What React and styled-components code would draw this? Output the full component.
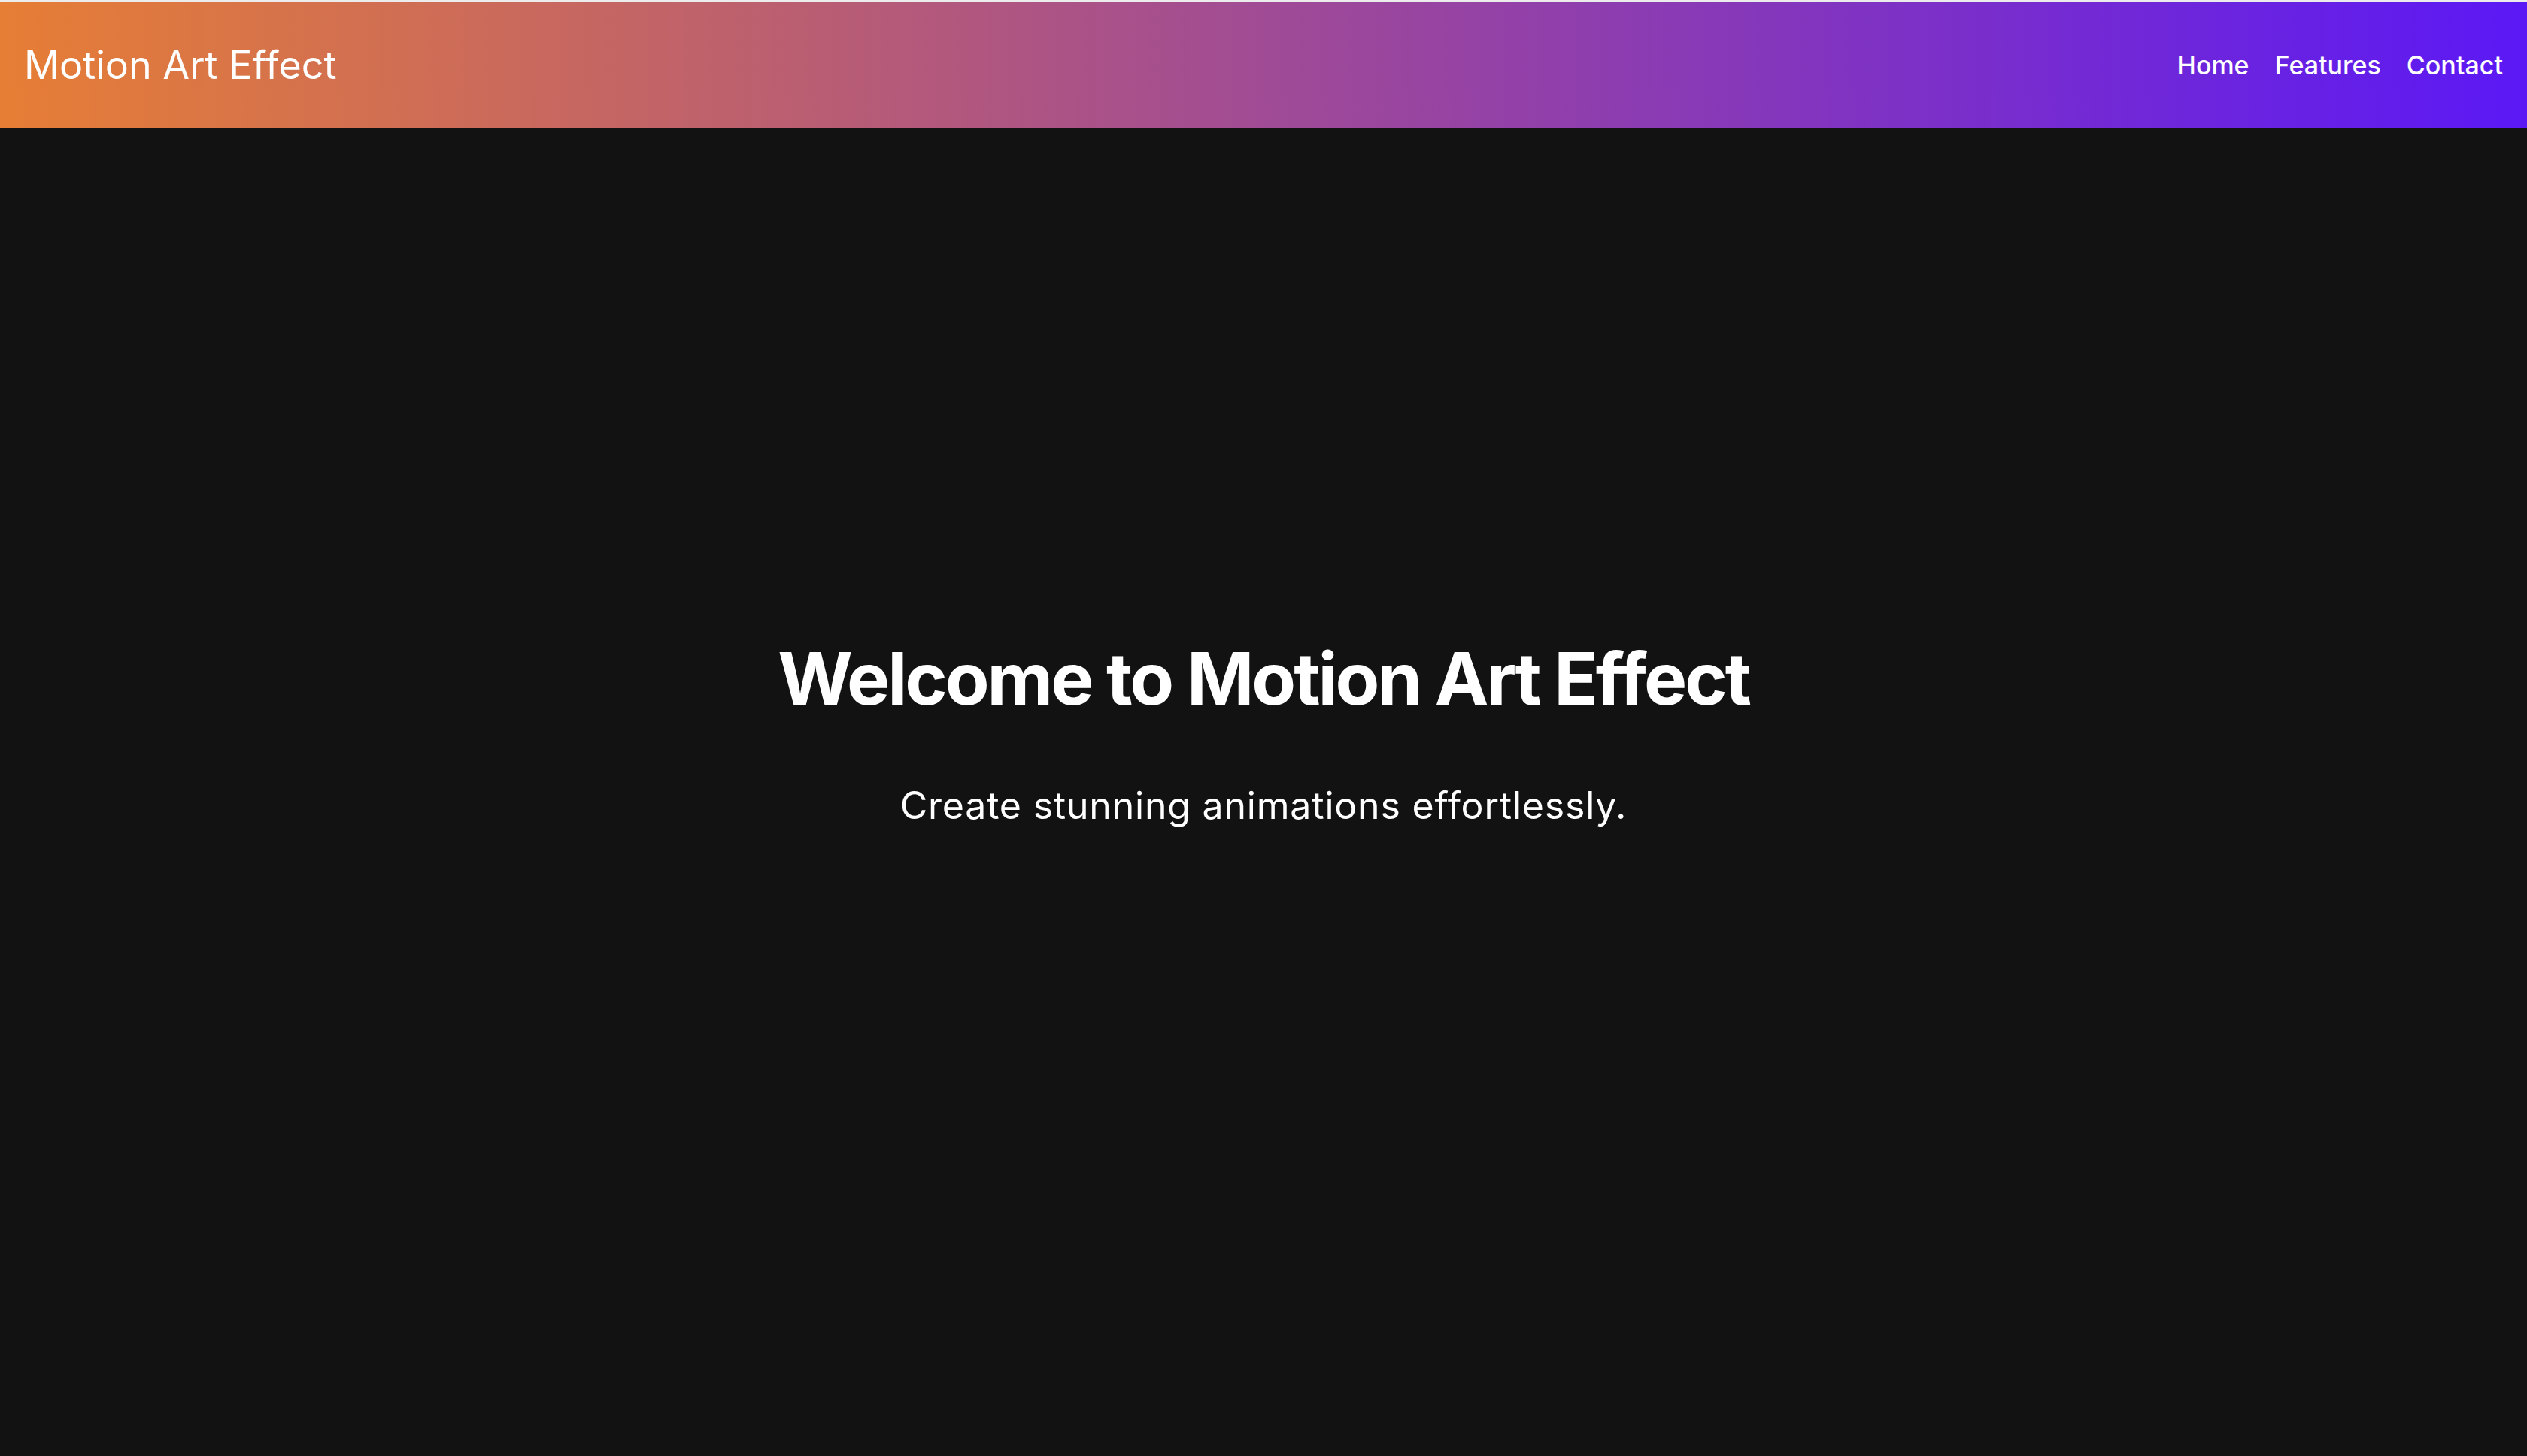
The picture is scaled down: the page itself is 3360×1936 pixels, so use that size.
import React from "react";
import styled, { createGlobalStyle } from "styled-components";

const GlobalStyle = createGlobalStyle`
  html, body {
    margin: 0;
    padding: 0;
  }
  body {
    background: #121212;
    font-family: Inter, "Noto Sans", sans-serif;
    color: #ffffff;
  }
`;

const Page = styled.div`
  min-height: 100vh;
  background: #121212;
  border-top: 2px solid #ececec;
  box-sizing: border-box;
`;

const Header = styled.header`
  height: 168px;
  display: flex;
  align-items: center;
  justify-content: space-between;
  padding: 0 32px;
  background: linear-gradient(90deg, #e67e35 0%, #5b18f5 100%);
`;

const Logo = styled.div`
  font-size: 52px;
  font-weight: 400;
  color: #fff;
`;

const Nav = styled.nav`
  display: flex;
  gap: 34px;
`;

const NavLink = styled.a`
  font-size: 34px;
  font-weight: 500;
  color: #fff;
  text-decoration: none;
  cursor: pointer;
`;

const Hero = styled.main`
  display: flex;
  flex-direction: column;
  align-items: center;
  padding-top: 675px;
  text-align: center;
`;

const Title = styled.h1`
  margin: 0;
  font-size: 96px;
  line-height: 1.2;
  font-weight: 700;
  letter-spacing: -3px;
`;

const Subtitle = styled.p`
  margin: 81px 0 0;
  font-size: 50px;
  line-height: 1.2;
  font-weight: 400;
  letter-spacing: 0.8px;
`;

export default function App() {
  const links = ["Home", "Features", "Contact"];
  return (
    <>
      <GlobalStyle />
      <Page>
        <Header>
          <Logo>Motion Art Effect</Logo>
          <Nav>
            {links.map((l) => (
              <NavLink key={l}>{l}</NavLink>
            ))}
          </Nav>
        </Header>
        <Hero>
          <Title>Welcome to Motion Art Effect</Title>
          <Subtitle>Create stunning animations effortlessly.</Subtitle>
        </Hero>
      </Page>
    </>
  );
}
